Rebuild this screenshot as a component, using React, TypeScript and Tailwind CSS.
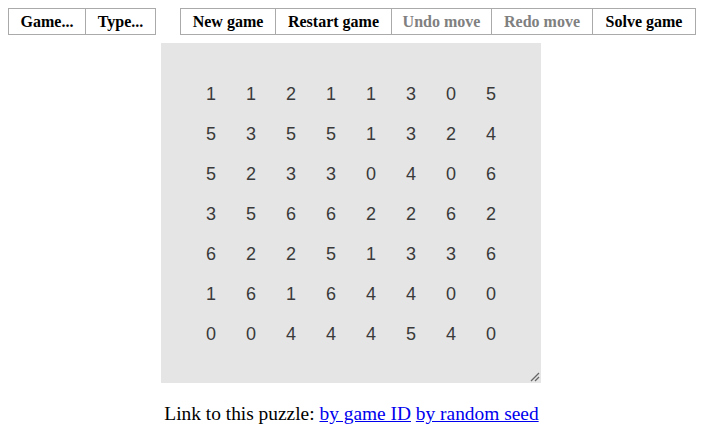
const grid = [
  [1, 1, 2, 1, 1, 3, 0, 5],
  [5, 3, 5, 5, 1, 3, 2, 4],
  [5, 2, 3, 3, 0, 4, 0, 6],
  [3, 5, 6, 6, 2, 2, 6, 2],
  [6, 2, 2, 5, 1, 3, 3, 6],
  [1, 6, 1, 6, 4, 4, 0, 0],
  [0, 0, 4, 4, 4, 5, 4, 0],
];

const Btn = ({ label, w, dim }: { label: string; w: string; dim?: boolean }) => (
  <div
    className={`${w} h-full flex items-center justify-center border-l border-[#aaaaaa] first:border-l-0 font-bold text-[16px] ${dim ? "text-[#808080]" : "text-black"}`}
  >
    {label}
  </div>
);

export default function App() {
  return (
    <div className="w-[703px] h-[446px] bg-white font-['Liberation_Serif',serif] text-black">
      <div className="flex pt-[8px] pl-[8px] h-[35px]">
        <div className="flex h-[27px] border border-[#aaaaaa]">
          <Btn label="Game..." w="w-[76px]" />
          <Btn label="Type..." w="w-[70px]" />
        </div>
        <div className="flex h-[27px] border border-[#aaaaaa] ml-[24px]">
          <Btn label="New game" w="w-[94px]" />
          <Btn label="Restart game" w="w-[116px]" />
          <Btn label="Undo move" w="w-[100px]" dim />
          <Btn label="Redo move" w="w-[101px]" dim />
          <Btn label="Solve game" w="w-[103px]" />
        </div>
      </div>
      <div className="flex justify-center mt-[8px] pr-[1px]">
        <div className="relative w-[380px] h-[340px] bg-[#e5e5e5] px-[30px] pt-[31px]">
          <div className="grid grid-cols-8 font-['Liberation_Sans',Arial,sans-serif] text-[18px] text-[#3a3a3a]">
            {grid.flat().map((n, i) => (
              <div key={i} className="h-[40px] flex items-center justify-center">
                {n}
              </div>
            ))}
          </div>
          <svg className="absolute right-[1px] bottom-[1px]" width="11" height="11" viewBox="0 0 11 11">
            <line x1="10" y1="2" x2="2" y2="10" stroke="#666" strokeWidth="1.2" />
            <line x1="10" y1="6" x2="6" y2="10" stroke="#666" strokeWidth="1.2" />
          </svg>
        </div>
      </div>
      <div className="text-center text-[19.4px] mt-[16px]">
        Link to this puzzle: <a href="#" className="text-[#0000ee] underline">by game ID</a>{" "}
        <a href="#" className="text-[#0000ee] underline">by random seed</a>
      </div>
    </div>
  );
}
